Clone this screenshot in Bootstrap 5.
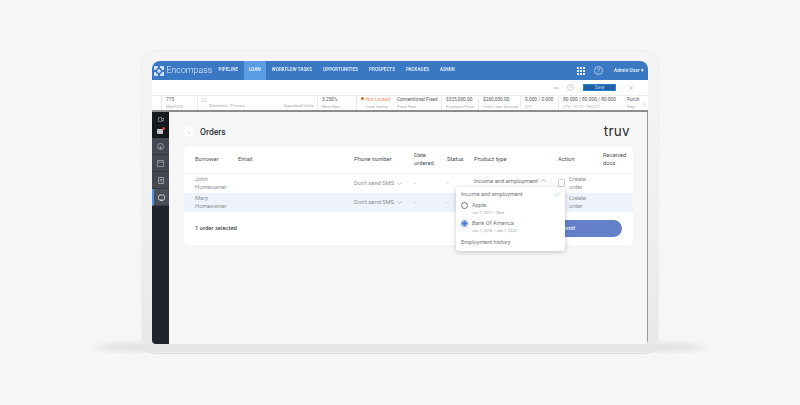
<!DOCTYPE html>
<html lang="en">
<head>
<meta charset="utf-8">
<title>Encompass Orders</title>
<link href="https://cdn.jsdelivr.net/npm/bootstrap@5.3.0/dist/css/bootstrap.min.css" rel="stylesheet">
<style>
html,body{height:405px;overflow:hidden}
body{background:#f6f6f6;font-family:Roboto,"Liberation Sans",sans-serif;color:#4a4d55;padding-top:50px}
.stage{width:518px;height:304px;margin-left:141px;position:relative}
.stage::before{content:"";position:absolute;left:-46px;right:-46px;bottom:0;height:13px;background:#cfcfcf;border-radius:50%;filter:blur(3px);opacity:.75;clip-path:inset(-10px -10px 1px -10px)}
.bezel{position:relative;height:304px;padding:11px 11px 10px;border-radius:15px;background:linear-gradient(#f5f5f5,#efefef 60%,#e9e9e9 92%,#e5e5e5);border-bottom:1px solid #dcdcdc;box-shadow:inset 0 0 0 1px #eeeeee}
.screen{height:283px;border-radius:8px 8px 4px 4px;overflow:hidden;background:#f6f6f6;filter:blur(.3px)}
.topbar{height:19px;background:#3a78c3;color:#fff}
.brand{width:61px;padding-left:2px;gap:2.500px;font-size:8.800px;font-weight:300;color:#e8f0fa}
.tab{height:19px;padding:0 5.500px;font-size:4.500px;font-weight:700;letter-spacing:.05px;color:#dbe8f7;white-space:nowrap}
.tab-on{background:#5b9ce6;color:#eaf3fd}
.admin{font-size:4.900px;font-weight:700;color:#dbe8f7;padding-right:4px;margin-left:11px}
.helpicon{margin-left:9px}
.toolbar{height:15px;background:#fff;padding-right:15px;color:#9aa0a8}
.savebtn{width:33px;height:7px;background:#1f5fa6;border:1px solid #2f7cc8;font-size:4.500px;line-height:5px;color:#bcd4ee;text-align:center;margin:0 13px 0 9px}
.strip{height:17px;background:#fff;border-bottom:2px solid #8d8d8d;border-top:1px solid #eee;font-size:4.800px;color:#55585e;white-space:nowrap}
.cell{height:14px;padding-left:4px;border-left:1px solid #e9e9e9;line-height:6px;padding-top:1px;flex:none}
.cell b{display:block;font-weight:400}
.cell i{display:block;font-style:normal;font-size:4.200px;color:#a8abaf;padding-top:1px}
.c0{width:9px;border-left:0}.c1{width:36px}.c2{width:120px}.c3{width:39px}.c4{width:37px}.c5{width:48px;border-left:0}.c6{width:37px}.c7{width:42px}.c8{width:38px}.c9{width:65px}.c10{width:25px;border-left:0}
.lock{color:#ee9268}.dot{display:inline-block;width:3px;height:3px;background:#e0692f;border-radius:50%;margin:0 2px 0 0;vertical-align:1px}
.sublabel-a{padding-left:5px}.sublabel-b{padding-left:7px}.sublabel-c{padding-right:3px}
.workspace{height:232px;border-right:1px solid #9a9a9a}
.rail{width:17px;background:#20232c;flex:none}
.rail-top{height:26px;background:#17191e;padding:2px 0}
.rail-item{height:17px;background:#444853;border-bottom:1px solid #343841}
.rail-on{border-left:2px solid #4a90e2;background:#4a4e58}
.main{padding:10px 14px 0 15px;background:#f6f6f6}
.heading{height:20px;margin-bottom:4px}
.backdot{width:10px;height:10px;border-radius:50%;background:#fff;font-size:6px;line-height:9px;color:#777;text-align:center;margin-right:6px}
.ttl{font-size:8.600px;font-weight:500;color:#33363c;margin:0}
.logo{font-family:Inter,Roboto,sans-serif;font-size:13.500px;font-weight:400;color:#2b2d33;letter-spacing:.3px;line-height:14px;margin-right:3px;margin-bottom:2px}
.sheet{height:99px;border:0;border-radius:5px;background:#fff;position:relative}
.grid-tbl{table-layout:fixed;width:449px;border-collapse:collapse;font-size:5.800px;line-height:8px;margin:0}
.grid-tbl th{height:27px;font-weight:400;color:#4d5057;border-bottom:1px solid #f0f0f0;padding:0;vertical-align:middle}
.grid-tbl td{padding:0;vertical-align:middle;color:#8b8e94;height:19.500px}
.grid-tbl .first{padding-left:11px}
.picked td{background:#eef3fb}
.grid-tbl td.soft{color:#6d7076;vertical-align:top;padding-top:3px}
.chev{margin-left:3px;vertical-align:.5px}
.checkbox-box{width:7px;height:8px;border:1px solid #cfd1d5;border-radius:1px;background:#fff;margin-right:4px;flex:none}
.actlabel{width:20px}
.foot{height:33px;padding:0 11px;font-size:5.800px;font-weight:500;color:#44474d}
.submit-b{width:112px;height:17px;border-radius:9px;background:#6380c8;color:#e9eefa;font-size:5.800px;font-weight:500;border:0;padding:0}
.pop{position:absolute;left:272px;top:41px;width:109px;height:64px;background:#fff;border-radius:3px;box-shadow:0 1px 5px rgba(0,0,0,.22);font-size:5.600px;color:#72757b;padding:3px 5px}
.pop-row{height:8px;line-height:8px}
.gap-s{margin-top:3px}.gap-m{margin-top:4px}
.radio-o{width:7px;height:7px;border:1px solid #6f7278;border-radius:50%;margin-right:4px;flex:none}
.radio-s{border-color:#5a86d6;background:radial-gradient(circle,#4f7bd0 0 2px,#fff 2.300px)}
.when{font-size:3.900px;color:#a0a3a8;padding-left:11px;height:7px;line-height:7px}
</style>
</head>
<body>
<div class="stage">
<div class="bezel">
<div class="screen d-flex flex-column">
  <div class="topbar d-flex align-items-center">
    <div class="brand d-flex align-items-center">
      <svg width="10" height="10" viewBox="0 0 10 10"><path d="M0 0h4v1.500L1.500 4H0zM6 0h4v4H8.500L6 1.500zM0 6h1.500L4 8.500V10H0zM8.500 6H10v4H6V8.500z" fill="#cfe0f4"/><path d="M5 2.800 7.200 5 5 7.200 2.800 5z" fill="#cfe0f4"/></svg>
      <span>Encompass</span>
    </div>
    <div class="tab d-flex align-items-center">PIPELINE</div>
    <div class="tab tab-on d-flex align-items-center">LOAN</div>
    <div class="tab d-flex align-items-center">WORKFLOW TASKS</div>
    <div class="tab d-flex align-items-center">OPPORTUNITIES</div>
    <div class="tab d-flex align-items-center">PROSPECTS</div>
    <div class="tab d-flex align-items-center">PACKAGES</div>
    <div class="tab d-flex align-items-center">ADMIN</div>
    <div class="ms-auto d-flex align-items-center">
      <svg width="8" height="8" viewBox="0 0 8 8" fill="#e9f1fb"><path d="M0 0h2v2H0zM3 0h2v2H3zM6 0h2v2H6zM0 3h2v2H0zM3 3h2v2H3zM6 3h2v2H6zM0 6h2v2H0zM3 6h2v2H3zM6 6h2v2H6z"/></svg>
      <svg class="helpicon" width="9" height="9" viewBox="0 0 9 9"><circle cx="4.500" cy="4.500" r="4" fill="none" stroke="#e1ecf8" stroke-width=".7"/><path d="M3.300 3.600c0-1.500 2.500-1.500 2.500 0 0 1-1.300 1-1.300 2M4.500 6.400v.7" fill="none" stroke="#e1ecf8" stroke-width=".7"/></svg>
      <span class="admin">Admin User ▾</span>
    </div>
  </div>
  <div class="toolbar d-flex align-items-center justify-content-end">
    <svg width="5" height="2" viewBox="0 0 5 2"><path d="M0 1h5" stroke="#8b8f96" stroke-width=".7"/></svg>
    <svg class="ms-2" width="7" height="7" viewBox="0 0 7 7" fill="none" stroke="#a0a5ac" stroke-width=".5"><circle cx="3.500" cy="3.500" r="3"/><path d="M3.500 1.700v2h1.500"/></svg>
    <div class="savebtn">Save</div>
    <svg width="4" height="4" viewBox="0 0 4 4"><path d="M.3.300l3.400 3.400M3.700.300.3 3.700" stroke="#9aa0a8" stroke-width=".5"/></svg>
  </div>
  <div class="strip d-flex">
    <div class="cell c0"></div>
    <div class="cell c1"><b>775</b><i>Mid-FICO</i></div>
    <div class="cell c2 d-flex flex-column"><svg width="5" height="5" viewBox="0 0 5 5" fill="none" stroke="#b5b8bc" stroke-width=".5"><path d="M.5 2.500 2.500.5l2 2v2h-4z"/></svg><div class="d-flex justify-content-between"><i class="sublabel-b">Detached / Primary</i><i class="sublabel-c">Appraised Value</i></div></div>
    <div class="cell c3"><b>3.250%</b><i>Note Rate</i></div>
    <div class="cell c4"><b class="lock"><span class="dot"></span>Not Locked</b><i class="sublabel-a">Lock Status</i></div>
    <div class="cell c5"><b>Conventional Fixed</b><i>Fixed Rate</i></div>
    <div class="cell c6"><b>$325,000.00</b><i>Purchase Price</i></div>
    <div class="cell c7"><b>$260,000.00</b><i>Total Loan Amount</i></div>
    <div class="cell c8"><b>0.000 / 0.000</b><i>DTI</i></div>
    <div class="cell c9"><b>80.000 / 80.000 / 80.000</b><i>LTV / CLTV / HCLTV</i></div>
    <div class="cell c10 d-flex"><div><b>Purch</b><i>Flag</i></div><svg class="ms-1 mt-1" width="3" height="6" viewBox="0 0 3 6" fill="none" stroke="#aaa" stroke-width=".5"><path d="M.5.500 2.500 3 .5 5.500"/></svg></div>
  </div>
  <div class="workspace d-flex flex-grow-1">
    <div class="rail">
      <div class="rail-top d-flex flex-column align-items-center justify-content-around">
        <svg width="6" height="5" viewBox="0 0 6 5" fill="none" stroke="#aeb1b7" stroke-width=".6"><path d="M.5.500h3v4h-3zM3.500 2l2-1v3l-2-1"/></svg>
        <svg width="8" height="7" viewBox="0 0 8 7"><rect y="2" width="6" height="5" rx="1" fill="#c4c6ca"/><circle cx="6.500" cy="1.500" r="1.500" fill="#e04545"/></svg>
      </div>
      <div class="rail-item d-flex align-items-center justify-content-center"><svg width="7" height="7" viewBox="0 0 7 7" fill="none" stroke="#b8bbc0" stroke-width=".7"><circle cx="3.500" cy="3.500" r="3"/><path d="M3.500 6V3.500"/><path d="M1.800 4.800a2.200 2.200 0 0 1 3.400 0" stroke-width=".5"/></svg></div>
      <div class="rail-item d-flex align-items-center justify-content-center"><svg width="7" height="7" viewBox="0 0 7 7" fill="none" stroke="#a8abb1" stroke-width=".7"><path d="M.5.500h6v6h-6zM.5 2.200h6"/></svg></div>
      <div class="rail-item d-flex align-items-center justify-content-center"><svg width="6" height="7" viewBox="0 0 6 7" fill="none" stroke="#b8bbc0" stroke-width=".7"><path d="M.5.500h5v6h-5zM1.700 2.500h2.600M1.700 4h2.600"/></svg></div>
      <div class="rail-item rail-on d-flex align-items-center justify-content-center"><svg width="7" height="7" viewBox="0 0 7 7"><rect x=".5" y="1" width="6" height="5" rx="1.500" fill="none" stroke="#c4c6ca" stroke-width="1"/><path d="M2 6h3v1H2z" fill="#c4c6ca"/></svg></div>
    </div>
    <div class="main flex-grow-1">
      <div class="heading d-flex align-items-center">
        <div class="backdot">‹</div>
        <h1 class="ttl">Orders</h1>
        <div class="logo ms-auto">truv</div>
      </div>
      <div class="sheet">
        <table class="grid-tbl">
          <colgroup><col class="w54"><col><col><col><col><col><col><col></colgroup>
          <thead><tr><th class="first" style="width:54px">Borrower</th><th style="width:116px">Email</th><th style="width:60px">Phone number</th><th style="width:33px">Date ordered</th><th style="width:27px">Status</th><th style="width:84px">Product type</th><th style="width:45px">Action</th><th style="width:30px">Received docs</th></tr></thead>
          <tbody>
            <tr><td class="first">John Homeowner</td><td></td><td>Don't send SMS<svg class="chev" width="5" height="3" viewBox="0 0 5 3" fill="none" stroke="#8b8e94" stroke-width=".5"><path d="M.5.500 2.500 2.500 4.500.5"/></svg></td><td>-</td><td>-</td><td class="soft">Income and employment<svg class="chev" width="5" height="3" viewBox="0 0 5 3" fill="none" stroke="#6d7076" stroke-width=".5"><path d="M.5 2.500 2.500.5 4.500 2.500"/></svg></td><td><div class="d-flex align-items-center"><span class="checkbox-box"></span><span class="actlabel">Create order</span></div></td><td></td></tr>
            <tr class="picked"><td class="first">Mary Homeowner</td><td></td><td>Don't send SMS<svg class="chev" width="5" height="3" viewBox="0 0 5 3" fill="none" stroke="#8b8e94" stroke-width=".5"><path d="M.5.500 2.500 2.500 4.500.5"/></svg></td><td>-</td><td>-</td><td></td><td><div class="d-flex align-items-center"><span class="checkbox-box"></span><span class="actlabel">Create order</span></div></td><td></td></tr>
          </tbody>
        </table>
        <div class="foot d-flex align-items-center justify-content-between">
          <span>1 order selected</span>
          <button class="submit-b" type="button">Submit</button>
        </div>
        <div class="pop">
          <div class="pop-row d-flex justify-content-between align-items-center"><span>Income and employment</span><svg width="6" height="5" viewBox="0 0 6 5" fill="none" stroke="#8fa9dc" stroke-width=".6"><path d="M.3 2.700 2 4.400 5.700.6"/></svg></div>
          <div class="pop-row gap-s d-flex align-items-center"><span class="radio-o"></span><span>Apple</span></div>
          <div class="when">Jun 1, 2021 – Now</div>
          <div class="pop-row gap-s d-flex align-items-center"><span class="radio-o radio-s"></span><span>Bank Of America</span></div>
          <div class="when">Jan 1, 2018 – Jan 1, 2020</div>
          <div class="pop-row gap-m">Employment history</div>
        </div>
      </div>
    </div>
  </div>
</div>
</div>
</div>
<script src="https://cdn.jsdelivr.net/npm/bootstrap@5.3.0/dist/js/bootstrap.bundle.min.js"></script>
</body>
</html>
